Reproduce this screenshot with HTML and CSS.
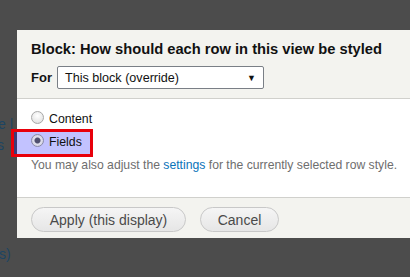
FILE: index.html
```html
<!DOCTYPE html>
<html>
<head>
<meta charset="utf-8">
<link rel="stylesheet" href="styles.css">
</head>
<body>
<div class="page">
  <div class="bg-text bg-t1">e |</div>
  <div class="bg-text bg-t2">s</div>
  <div class="bg-text bg-t3">s)</div>
  <div class="dialog">
    <div class="dlg-head">
      <h1 class="title">Block: How should each row in this view be styled</h1>
      <div class="for-row">
        <label class="for-label">For</label>
        <div class="select">
          <span class="select-text">This block (override)</span>
          <span class="select-arrow">&#9660;</span>
        </div>
      </div>
    </div>
    <div class="dlg-body">
      <div class="radio-row">
        <span class="radio"></span>
        <span class="radio-label">Content</span>
      </div>
      <div class="radio-row selected">
        <span class="radio checked"></span>
        <span class="radio-label">Fields</span>
      </div>
      <p class="help">You may also adjust the <a class="link">settings</a> for the currently selected row style.</p>
    </div>
    <div class="dlg-foot">
      <button class="btn btn-apply">Apply (this display)</button>
      <button class="btn btn-cancel">Cancel</button>
    </div>
  </div>
</div>
</body>
</html>
```
FILE: styles.css
```css
html, body {
  margin: 0;
  padding: 0;
}
body {
  width: 410px;
  height: 277px;
  overflow: hidden;
  background: #4c4c4c;
  font-family: "Liberation Sans", Arial, sans-serif;
}
.page {
  position: relative;
  width: 410px;
  height: 277px;
  padding-top: 30px;
  box-sizing: border-box;
}
.bg-text {
  position: absolute;
  left: -1px;
  color: #1c4563;
  font-size: 14px;
}
.bg-t1 { top: 116px; left: -2px; }
.bg-t2 { top: 137px; left: -3px; }
.bg-t3 { top: 246px; left: -1px; }
.dialog {
  margin-left: 17px;
  width: 420px;
  position: relative;
}
.dlg-head {
  background: #f3f3ef;
  padding: 10px 14px 8px;
  border-bottom: 1px solid #d0d0cc;
  height: 50px;
}
.title {
  margin: 0;
  font-size: 14.7px;
  font-weight: bold;
  color: #111;
  line-height: 18px;
}
.for-row {
  display: flex;
  align-items: center;
  margin-top: 8px;
}
.for-label {
  font-weight: bold;
  font-size: 13px;
  color: #111;
  margin-right: 5px;
}
.select {
  height: 21px;
  border: 1px solid #7a7f86;
  border-radius: 2px;
  background: #fff;
  display: flex;
  align-items: center;
  justify-content: space-between;
  padding: 0 7px 0 7px;
  width: 191px;
}
.select-text {
  font-size: 12.6px;
  color: #111;
}
.select-arrow {
  font-size: 9px;
  color: #111;
}
.dlg-body {
  background: #fff;
  height: 99px;
  padding: 9px 0 0 14px;
  box-sizing: border-box;
  border-bottom: 1px solid #d0d0cc;
}
.radio-row {
  display: flex;
  align-items: center;
  height: 22px;
}
.radio-row.selected {
  position: relative;
  margin-top: 1px;
}
.radio-row.selected::before {
  content: "";
  position: absolute;
  left: -20px;
  top: -2px;
  width: 76px;
  height: 22px;
  background: #c2c2ff;
  border: 3px solid #e8000b;
  box-shadow: inset 3px 0 0 #3c3c78;
}
.radio, .radio-label {
  position: relative;
}
.radio {
  width: 11px;
  height: 11px;
  border-radius: 50%;
  border: 1px solid #a8a8a8;
  background: radial-gradient(circle at 50% 35%, #ffffff 0%, #e6e6e6 70%, #d0d0d0 100%);
  margin-right: 5px;
  margin-top: -3px;
}
.radio.checked {
  background: radial-gradient(circle, #505070 0 2.5px, #e0e0ee 3.5px, #c8c8dc 100%);
  border-color: #8a8aa8;
}
.radio-label {
  font-size: 12.3px;
  color: #111;
}
.help {
  margin: 5px 0 0;
  font-size: 12.2px;
  line-height: 14px;
  color: #6e6e6e;
}
.link {
  color: #0a74b9;
}
.dlg-foot {
  background: #f3f3ef;
  height: 40px;
  padding: 9px 0 0 14px;
  box-sizing: border-box;
  display: flex;
  align-items: flex-start;
  gap: 14px;
}
.btn {
  font-family: "Liberation Sans", Arial, sans-serif;
  font-size: 14px;
  color: #4a4a4a;
  height: 25px;
  border: 1px solid #c8c8c8;
  border-radius: 13px;
  background: linear-gradient(#f5f5f5, #e6e6e6);
  padding: 0;
  margin: 0;
}
.btn-apply { width: 155px; }
.btn-cancel { width: 79px; }
```
